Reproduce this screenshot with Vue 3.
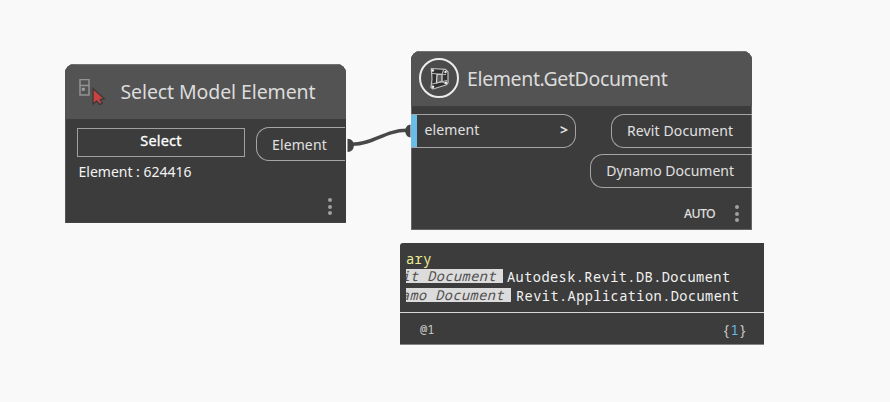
<script setup>
const outputs = ['Revit Document', 'Dynamo Document']
const rows = [
  { key: 'it Document', value: 'Autodesk.Revit.DB.Document' },
  { key: 'amo Document', value: 'Revit.Application.Document' },
]
</script>

<template>
  <main class="canvas">
    <svg class="wire" width="890" height="402" viewBox="0 0 890 402">
      <path d="M352 144.3C374 144.3 384 130.3 407 130.3" fill="none" stroke="#484848" stroke-width="3.4" />
      <path d="M347.5 138.8C356 138.8 356 152 347.5 152Z" fill="#424242" />
      <path d="M410.5 124.5C403.5 125 403.5 137 410.5 137.5Z" fill="#424242" />
    </svg>

    <section class="node select-node">
      <header class="head">
        <svg class="pick-icon" width="28" height="28" viewBox="0 0 28 28">
          <path d="M2 .5H11V16H2ZM2 6.5H11" fill="none" stroke="#939393" stroke-width="1.5" />
          <rect x="3.8" y="8.8" width="3" height="3" fill="#a0a0a0" />
          <path d="M15 9.5V25L18.7 21.9L21.5 25.5L24.2 24.1L22.3 20.5L26.3 19.8Z" fill="#c74440" stroke="#403838" stroke-width="1.4" />
        </svg>
        <h1>Select Model Element</h1>
      </header>
      <div class="select-body">
        <div class="picker">
          <button>Select</button>
          <p>Element : 624416</p>
        </div>
        <div class="port out">Element</div>
      </div>
      <footer class="foot"><span class="dots"><i /><i /><i /></span></footer>
    </section>

    <section class="node doc-node">
      <header class="head">
        <svg class="doc-icon" width="42" height="42" viewBox="0 0 42 42">
          <circle cx="21" cy="21" r="19" fill="#4b4b4b" stroke="#ececec" stroke-width="2" />
          <path d="M13.3 11.5L27.5 12.3L30 15V26L28 28L15 32L13 30.5L14 22Z" fill="#303030" stroke="#c2c2c2" stroke-width="1.2" stroke-linejoin="round" />
          <path d="M19 17.5H24V24.5L18.5 26Z" fill="#5c5c5c" stroke="#ddd" stroke-width="1.2" />
          <path d="M14 16.5L28 17.5M14 27L29 23.5M24 17.5L25.5 13M24 24.5L28 27" fill="none" stroke="#bbb" stroke-width="1.1" />
          <g fill="#eee"><circle cx="14.8" cy="13.5" r="1.3" /><circle cx="27.5" cy="15" r="1.2" /><circle cx="28" cy="25.8" r="1.2" /><circle cx="15" cy="29.8" r="1.3" /></g>
        </svg>
        <h1>Element.GetDocument</h1>
      </header>
      <div class="doc-body">
        <div class="port in"><span>element</span><b>&gt;</b></div>
        <div class="outs">
          <div v-for="o in outputs" :key="o" class="port out">{{ o }}</div>
        </div>
      </div>
      <footer class="foot"><span class="auto">AUTO</span><span class="dots"><i /><i /><i /></span></footer>
    </section>

    <section class="preview">
      <div class="watch">
        <div class="line type">ary</div>
        <div v-for="(r, n) in rows" :key="r.key" class="line" :class="n ? 'second' : 'first'">
          <span class="tag"><em>{{ r.key }}</em></span><span class="value">{{ r.value }}</span>
        </div>
      </div>
      <footer class="levels"><span class="level">@1</span><span class="count">{<b>1</b>}</span></footer>
    </section>
  </main>
</template>

<style>
body { background: #f9f9f9; overflow: hidden; }
</style>

<style scoped>
* { box-sizing: border-box; }
.canvas { position: relative; width: 890px; height: 402px; background: #f9f9f9; font-family: "Noto Sans", sans-serif; font-size: 14px; color: #e0e0e0; }
.wire { position: absolute; left: 0; top: 0; }
.node { position: absolute; display: flex; flex-direction: column; background: #3c3c3c; border-radius: 9px 9px 0 0; overflow: hidden; box-shadow: inset 1px 0 #555, inset 0 -1px #454545; }
.select-node { left: 65px; top: 64px; width: 281px; height: 159px; }
.doc-node { left: 411px; top: 51px; width: 341px; height: 179px; box-shadow: inset 1px 0 #666, inset -1px -1px #666; }
.head { display: flex; flex: 0 0 55px; background: #535353; border-top: 1px solid #727272; }
h1 { margin: 0; font-weight: 400; font-size: 19.5px; line-height: 54px; letter-spacing: -.1px; color: #dcdcdc; white-space: nowrap; }
.pick-icon { margin: 14px 14.5px 0 13px; }
.doc-icon { margin: 5px 7px 0 7px; }
.doc-node h1 { letter-spacing: -.37px; }
.select-body { display: flex; justify-content: space-between; height: 72px; padding: 8px 0 0 12px; }
.picker { width: 168px; padding-top: 1px; }
button { display: block; width: 168px; height: 29px; padding: 0 0 4px; border: 1px solid #a0a0a0; background: none; color: #fff; font: 400 14.5px/23px "Noto Sans", sans-serif; letter-spacing: .2px; -webkit-text-stroke: .3px #fff; }
p { margin: 5px 0 0 1.5px; line-height: 19px; color: #f3f3f3; white-space: nowrap; }
.port { height: 34px; border: 1px solid #a5a5a5; line-height: 32px; white-space: nowrap; }
.out { border-right: 0; border-radius: 13px 0 0 13px; padding: 0 18px 0 15px; }
.outs .out { line-height: 31px; }
.outs .out:first-child { width: 141px; letter-spacing: .12px; }
.select-body .out { width: 89px; margin-right: 1px; padding-right: 0; line-height: 33px; letter-spacing: .12px; }
.foot { display: flex; justify-content: flex-end; align-items: flex-start; }
.dots { display: flex; flex-direction: column; gap: 2.5px; margin: 7px 14px 0 0; }
.dots i { width: 4px; height: 4px; border-radius: 50%; background: #a0a0a0; }
.doc-body { display: flex; justify-content: space-between; padding-top: 8px; height: 90px; }
.in { width: 165px; display: flex; border-left: 0; border-radius: 0 13px 13px 0; padding: 0 7px 0 0; line-height: 30px; }
.in::before { content: ""; width: 6px; background: #68bee6; }
.in span { margin-right: auto; margin-left: 7.5px; letter-spacing: .12px; }
.in b { font-size: 14px; }
.outs { display: flex; flex-direction: column; align-items: flex-end; gap: 6px; }
.auto { margin: 8px 20px 0 0; font-weight: 500; font-size: 12.3px; line-height: 20px; letter-spacing: -.6px; }
.doc-node .dots { margin-right: 13px; margin-top: 9px; }
.preview { position: absolute; left: 400px; top: 243px; width: 364px; height: 102px; background: #3c3c3c; border-radius: 3px 0 0 0; border-bottom: 1px solid #858585; font-family: "Noto Sans Mono", "DejaVu Sans Mono", monospace; font-size: 13.6px; letter-spacing: .44px; }
.watch { height: 70px; padding: 5px 0 0 6px; border-bottom: 1px solid #d8d8d8; }
.line { display: flex; height: 19px; line-height: 19px; white-space: nowrap; color: #f2f2f2; }
.type { color: #eded94; line-height: 21px; }
.tag { display: flex; justify-content: flex-end; width: 97px; height: 14px; margin: 2px 4px 0 0; padding-right: 7px; overflow: hidden; background: #dcdcdc; color: #505050; line-height: 13px; }
.second .tag { width: 105px; margin-right: 5px; }
.levels { display: flex; justify-content: space-between; padding: 0 17px 0 20px; line-height: 33px; color: #c8c8c8; }
.level { font-size: 12.2px; letter-spacing: 0; }
.count { letter-spacing: .1px; }
.count b { font-weight: 400; color: #62b6e5; }
</style>
